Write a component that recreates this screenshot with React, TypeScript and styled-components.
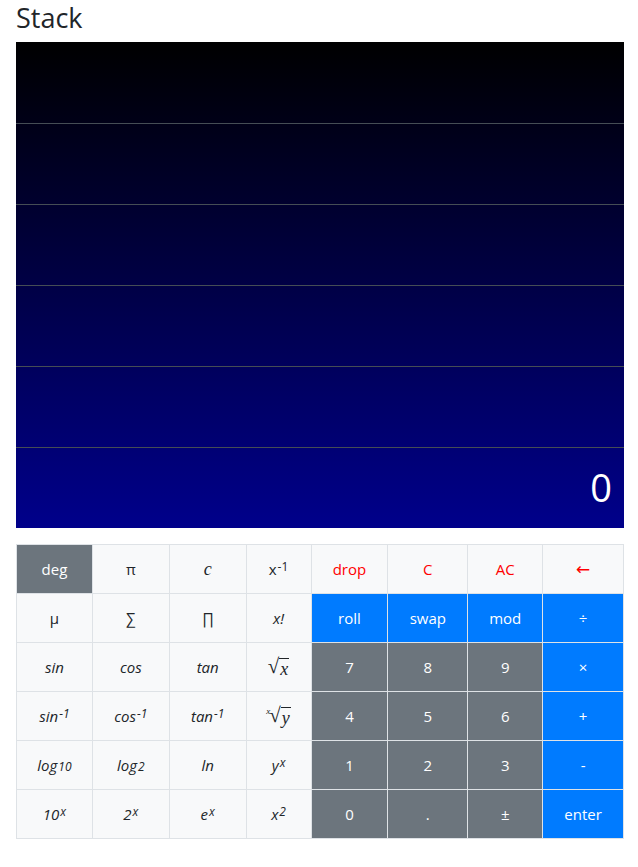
import React from "react"
import styled, { createGlobalStyle, css } from "styled-components"

const GlobalStyle = createGlobalStyle`
  html, body {
    margin: 0;
    padding: 0;
    background: #fff;
  }
  body {
    font-family: "Open Sans", "Noto Sans", Roboto, sans-serif;
    font-size: 16px;
    color: #212529;
  }
  * { box-sizing: border-box; }
`

type Variant = "light" | "dark" | "primary" | "danger"

const Page = styled.div`
  width: 608px;
  margin-left: 16px;
`

const Title = styled.h3`
  margin: 0 0 6px;
  font-size: 27px;
  font-weight: 400;
  line-height: 36px;
`

const Stack = styled.div`
  display: grid;
  grid-template-rows: repeat(6, 81px);
  background: linear-gradient(to bottom, #000000, #00008b);
  color: #fff;
`

const StackRow = styled.div`
  display: flex;
  align-items: center;
  justify-content: flex-end;
  padding: 0 12px 2px;
  font-size: 38px;
  & + & {
    border-top: 1px solid #454d55;
  }
`

const Keypad = styled.div`
  display: grid;
  grid-template-columns: 75fr 76fr 76fr 64fr 76fr 79fr 74fr 80fr;
  grid-auto-rows: 48px;
  gap: 1px;
  padding: 1px;
  margin-top: 16px;
  background: #dee2e6;
`

const variants = {
  light: css`
    background: #f8f9fa;
    color: #212529;
  `,
  danger: css`
    background: #f8f9fa;
    color: #ff0000;
  `,
  dark: css`
    background: #6c757d;
    color: #fff;
  `,
  primary: css`
    background: #007bff;
    color: #fff;
  `,
}

const Key = styled.div<{ $v: Variant; $italic?: boolean }>`
  display: flex;
  align-items: center;
  justify-content: center;
  font-size: 15px;
  font-style: ${(p) => (p.$italic ? "italic" : "normal")};
  ${(p) => variants[p.$v]}
  sup {
    font-size: 12px;
    position: relative;
    top: -3px;
    margin-left: 1px;
  }
  sub {
    font-size: 12px;
    position: relative;
    top: 1px;
    margin-left: 1px;
  }
`

const Arrow = styled.span`
  font-family: "DejaVu Sans", sans-serif;
  font-size: 17px;
`

const MathVar = styled.span`
  font-family: "Liberation Serif", "DejaVu Serif", serif;
  font-style: italic;
  font-size: 18px;
`

const Root = styled.span`
  display: inline-flex;
  align-items: flex-start;
  font-family: "Liberation Serif", "DejaVu Serif", serif;
  line-height: 1;
`

const RootSign = styled.span`
  font-size: 21px;
  font-style: normal;
`

const RootIndex = styled.span`
  font-size: 9px;
  font-style: italic;
  margin-right: -1px;
  margin-top: 2px;
`

const Radicand = styled.span`
  border-top: 1px solid #212529;
  margin-top: 2px;
  padding: 1px 1px 0;
  font-style: italic;
  font-size: 18px;
`

const keys: { label: React.ReactNode; v: Variant; i?: boolean }[] = [
  { label: "deg", v: "dark" },
  { label: "π", v: "light" },
  { label: <MathVar>c</MathVar>, v: "light" },
  { label: <>x<sup>-1</sup></>, v: "light" },
  { label: "drop", v: "danger" },
  { label: "C", v: "danger" },
  { label: "AC", v: "danger" },
  { label: <Arrow>←</Arrow>, v: "danger" },

  { label: "μ", v: "light" },
  { label: "∑", v: "light" },
  { label: "∏", v: "light" },
  { label: "x!", v: "light", i: true },
  { label: "roll", v: "primary" },
  { label: "swap", v: "primary" },
  { label: "mod", v: "primary" },
  { label: "÷", v: "primary" },

  { label: "sin", v: "light", i: true },
  { label: "cos", v: "light", i: true },
  { label: "tan", v: "light", i: true },
  {
    label: (
      <Root>
        <RootSign>√</RootSign>
        <Radicand>x</Radicand>
      </Root>
    ),
    v: "light",
  },
  { label: "7", v: "dark" },
  { label: "8", v: "dark" },
  { label: "9", v: "dark" },
  { label: "×", v: "primary" },

  { label: <>sin<sup>-1</sup></>, v: "light", i: true },
  { label: <>cos<sup>-1</sup></>, v: "light", i: true },
  { label: <>tan<sup>-1</sup></>, v: "light", i: true },
  {
    label: (
      <Root>
        <RootIndex>x</RootIndex>
        <RootSign>√</RootSign>
        <Radicand>y</Radicand>
      </Root>
    ),
    v: "light",
  },
  { label: "4", v: "dark" },
  { label: "5", v: "dark" },
  { label: "6", v: "dark" },
  { label: "+", v: "primary" },

  { label: <>log<sub>10</sub></>, v: "light", i: true },
  { label: <>log<sub>2</sub></>, v: "light", i: true },
  { label: "ln", v: "light", i: true },
  { label: <>y<sup>x</sup></>, v: "light", i: true },
  { label: "1", v: "dark" },
  { label: "2", v: "dark" },
  { label: "3", v: "dark" },
  { label: "-", v: "primary" },

  { label: <>10<sup>x</sup></>, v: "light", i: true },
  { label: <>2<sup>x</sup></>, v: "light", i: true },
  { label: <>e<sup>x</sup></>, v: "light", i: true },
  { label: <>x<sup>2</sup></>, v: "light", i: true },
  { label: "0", v: "dark" },
  { label: ".", v: "dark" },
  { label: "±", v: "dark" },
  { label: "enter", v: "primary" },
]

const stack = ["", "", "", "", "", "0"]

export default function App() {
  return (
    <Page>
      <GlobalStyle />
      <Title>Stack</Title>
      <Stack>
        {stack.map((s, n) => (
          <StackRow key={n}>{s}</StackRow>
        ))}
      </Stack>
      <Keypad>
        {keys.map((k, n) => (
          <Key key={n} $v={k.v} $italic={k.i}>
            {k.label}
          </Key>
        ))}
      </Keypad>
    </Page>
  )
}
